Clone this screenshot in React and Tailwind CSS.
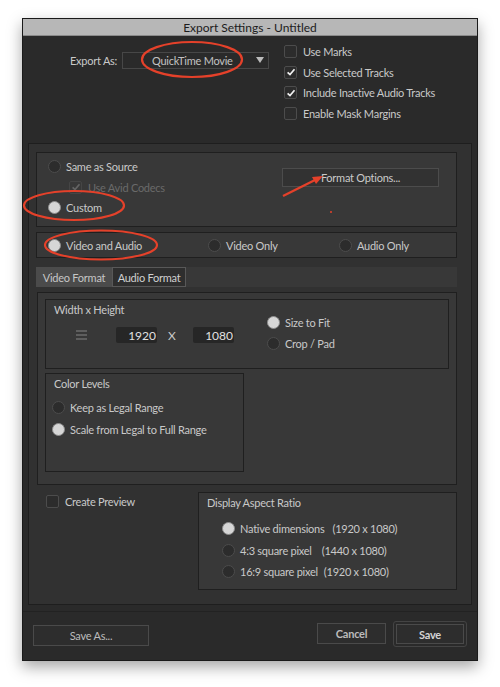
import React from 'react';

const Radio = ({ on, label, className = '', children }) => (
  <div className={`flex items-center h-[13px] gap-[5px] ${className}`}>
    <span
      className={`w-[13px] h-[13px] rounded-full border shrink-0 ${
        on ? 'bg-[#d6d6d6] border-[#8e8e8e]' : 'bg-[#2c2c2c] border-[#4c4c4c]'
      }`}
    ></span>
    <span className="whitespace-nowrap">{label}</span>
    {children}
  </div>
);

const Check = ({ on, label, dim, className = '' }) => (
  <div className={`flex items-center h-[13px] gap-[6px] ${dim ? 'text-[#6a6a6a]' : ''} ${className}`}>
    <span
      className={`w-[13px] h-[13px] rounded-[2px] border shrink-0 flex items-center justify-center ${
        dim ? 'border-[#454545] bg-[#383838]' : 'border-[#4c4c4c] bg-[#2c2c2c]'
      }`}
    >
      {on && (
        <svg width="10" height="10" viewBox="0 0 10 10">
          <path d="M1.6 5.3 L4 7.6 L8.5 2.3" fill="none" stroke={dim ? '#646464' : '#f2f2f2'} strokeWidth="1.7" />
        </svg>
      )}
    </span>
    <span className="whitespace-nowrap">{label}</span>
  </div>
);

const Box = ({ className = '', children }) => (
  <div className={`border border-[#1f1f1f] bg-[#383838] ${className}`}>{children}</div>
);

const Button = ({ className = '', children }) => (
  <div className={`border border-[#4a4a4a] bg-[#2d2d2d] flex items-center justify-center text-[#bcbcbc] ${className}`}>
    {children}
  </div>
);

export default function App() {
  return (
    <div
      className="relative w-[500px] h-[687px] bg-white pt-[18px] pl-[22px] text-[11px] leading-[13px] tracking-[-0.25px] text-[#c9c9c9]"
      style={{ fontFamily: 'Lato, "Open Sans", sans-serif' }}
    >
      <div className="w-[456px] h-[643px] bg-[#2a2a2a] border border-[#1a1a1a] flex flex-col shadow-[0_6px_14px_rgba(0,0,0,0.35)]">
        {/* title bar */}
        <div className="h-[17px] shrink-0 bg-[#b7b7b7] border-b border-[#8a8a8a] flex items-center justify-center text-[#1c1c1c] text-[12px] tracking-normal">
          Export Settings - Untitled
        </div>

        {/* top */}
        <div className="h-[107px] shrink-0 flex pt-[9px]">
          <div className="w-[261px] flex items-start pt-[7px]">
            <div className="w-[99px] pl-[47px] pt-[2px]">Export As:</div>
            <div className="relative w-[147px] h-[17px] border border-[#474747] bg-[#2a2a2a] flex items-center pl-[29px] text-[#c2c2c2]">
              QuickTime Movie
              <svg className="absolute right-[4px] top-[3px]" width="8" height="8" viewBox="0 0 8 8">
                <path d="M0 1 L8 1 L4 7 Z" fill="#bcbcbc" />
              </svg>
            </div>
          </div>
          <div className="flex flex-col gap-[7.5px]">
            <Check label="Use Marks" />
            <Check on label="Use Selected Tracks" />
            <Check on label="Include Inactive Audio Tracks" />
            <Check label="Enable Mask Margins" />
          </div>
        </div>

        {/* main frame */}
        <div className="mx-[5px] h-[462px] shrink-0 bg-[#313131] border border-[#1e1e1e] pl-[7px] pr-[14px] pt-[8px]">
          <Box className="h-[75px] flex">
            <div className="w-[245px] pl-[11px] pt-[7px] flex flex-col gap-[7.5px]">
              <Radio label="Same as Source" />
              <Check on dim label="Use Avid Codecs" className="ml-[21px]" />
              <Radio on label="Custom" />
            </div>
            <div className="pt-[15px]">
              <Button className="w-[157px] h-[19px] border-[#4c4c4c] bg-[#323232] text-[#cacaca]">Format Options...</Button>
            </div>
          </Box>

          <Box className="mt-[5px] h-[26px] flex items-center pl-[11px]">
            <Radio on label="Video and Audio" className="w-[160px]" />
            <Radio label="Video Only" className="w-[131px]" />
            <Radio label="Audio Only" />
          </Box>

          <div className="mt-[9px] h-[20px] bg-[#383838] flex">
            <div className="w-[76px] bg-[#4b4b4b] flex items-center justify-center text-[#c6c6c6]">Video Format</div>
            <div className="w-[74px] border border-[#585858] bg-[#2e2e2e] flex items-center justify-center text-[#d0d0d0]">
              Audio Format
            </div>
          </div>

          <Box className="mt-[5px] ml-[1px] h-[193px] px-[7px] pt-[6px]">
            <Box className="h-[70px] flex">
              <div className="w-[221px]">
                <div className="pl-[8px] pt-[3px]">Width x Height</div>
                <div className="flex items-center mt-[11px]">
                  <div className="w-[70px] pl-[30px] flex flex-col gap-[2px]">
                    <span className="w-[11px] h-[2px] bg-[#5e5e5e]"></span>
                    <span className="w-[11px] h-[2px] bg-[#5e5e5e]"></span>
                    <span className="w-[11px] h-[2px] bg-[#5e5e5e]"></span>
                  </div>
                  <div className="w-[41px] h-[16px] bg-[#262626] rounded-[2px] flex items-center justify-end pr-[1px] text-[12px] text-[#e0e0e0] tracking-normal">
                    1920
                  </div>
                  <span className="w-[36px] pl-[11px] text-[12px] tracking-normal">X</span>
                  <div className="w-[41px] h-[16px] bg-[#262626] rounded-[2px] flex items-center justify-end pr-[1px] text-[12px] text-[#e0e0e0] tracking-normal">
                    1080
                  </div>
                </div>
              </div>
              <div className="pt-[16px] flex flex-col gap-[8px]">
                <Radio on label="Size to Fit" />
                <Radio label="Crop / Pad" />
              </div>
            </Box>
            <Box className="mt-[4px] w-[199px] h-[99px] pl-[6px]">
              <div className="pl-[2px] pt-[3px]">Color Levels</div>
              <div className="mt-[11px] flex flex-col gap-[9px]">
                <Radio label="Keep as Legal Range" />
                <Radio on label="Scale from Legal to Full Range" />
              </div>
            </Box>
          </Box>

          <div className="flex mt-[7px]">
            <div className="w-[162px] pl-[10px] pt-[3px]">
              <Check label="Create Preview" />
            </div>
            <Box className="flex-1 h-[98px] pl-[8px] pt-[3px]">
              <div>Display Aspect Ratio</div>
              <div className="mt-[13px] pl-[15px] flex flex-col gap-[8.5px]">
                <Radio on label="Native dimensions">
                  <span className="ml-[3px] whitespace-nowrap">(1920 x 1080)</span>
                </Radio>
                <Radio label="4:3 square pixel">
                  <span className="ml-[5px] whitespace-nowrap">(1440 x 1080)</span>
                </Radio>
                <Radio label="16:9 square pixel">
                  <span className="ml-[1px] whitespace-nowrap">(1920 x 1080)</span>
                </Radio>
              </div>
            </Box>
          </div>
        </div>

        {/* footer */}
        <div className="mt-[6px] border-t border-[#222] flex-1 flex items-start pt-[9px] pl-[10px] pr-[10px]">
          <Button className="mt-[4px] w-[116px] h-[21px]">Save As...</Button>
          <div className="flex-1"></div>
          <Button className="mt-[2px] w-[69px] h-[21px] font-bold">Cancel</Button>
          <div className="ml-[7px] p-[2px] border border-[#444] rounded-[3px]">
            <Button className="w-[68px] h-[20px] font-bold text-[#d4d4d4]">Save</Button>
          </div>
        </div>
      </div>

      {/* red annotations */}
      <svg className="absolute left-0 top-0 pointer-events-none" width="500" height="687" viewBox="0 0 500 687">
        <g fill="none" stroke="#e5412a" strokeWidth="2.2">
          <ellipse cx="192" cy="59.5" rx="50" ry="17.5" />
          <ellipse cx="74" cy="205.5" rx="50" ry="14.5" />
          <ellipse cx="101" cy="245" rx="56" ry="14.5" />
          <path d="M283 196 L315 180" />
        </g>
        <path d="M323 176 L312 177 L316 184 Z" fill="#e5412a" />
        <circle cx="331" cy="212" r="1" fill="#e5412a" />
      </svg>
    </div>
  );
}
